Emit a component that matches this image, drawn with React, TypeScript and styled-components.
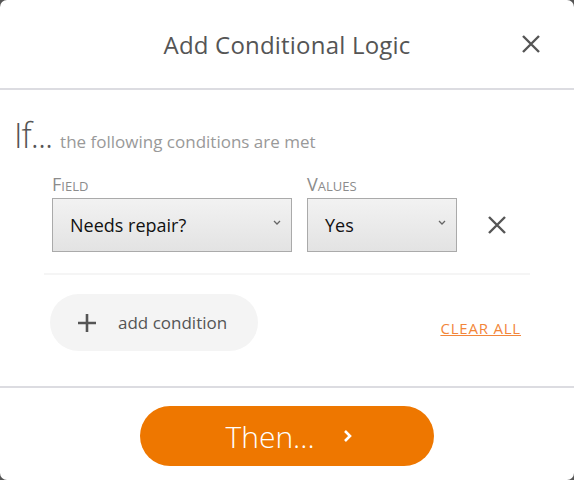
import { createGlobalStyle, styled } from 'styled-components';

const GlobalStyle = createGlobalStyle`
  html, body {
    margin: 0;
    padding: 0;
    background: #555555;
  }
  body {
    font-family: 'Open Sans', 'Noto Sans', sans-serif;
  }
  * {
    box-sizing: border-box;
  }
`;

function CrossIcon({ size = 20, stroke = 2.4 }: { size?: number; stroke?: number }) {
  return (
    <svg width={size} height={size} viewBox="0 0 20 20" fill="none">
      <path
        d="M2 2 L18 18 M18 2 L2 18"
        stroke="#555"
        strokeWidth={stroke}
        strokeLinecap="butt"
      />
    </svg>
  );
}

function Caret() {
  return (
    <svg width="8" height="5" viewBox="0 0 8 5" fill="none">
      <path d="M1 1 L4 4 L7 1" stroke="#666" strokeWidth="1.3" />
    </svg>
  );
}

function App() {
  return (
    <>
      <GlobalStyle />
      <Styled.Modal>
        <Styled.Header>
          <span />
          <Styled.Title>Add Conditional Logic</Styled.Title>
          <Styled.IconButton $align="end" aria-label="close">
            <CrossIcon size={20} stroke={2.4} />
          </Styled.IconButton>
        </Styled.Header>

        <Styled.Body>
          <Styled.IfLine>
            <Styled.IfWord>If...</Styled.IfWord>
            <Styled.IfNote>the following conditions are met</Styled.IfNote>
          </Styled.IfLine>

          <Styled.Conditions>
            <Styled.Row>
              <Styled.Label>Field</Styled.Label>
              <Styled.Label>Values</Styled.Label>
              <span />
              <Styled.Select $width={240}>
                <span>Needs repair?</span>
                <Caret />
              </Styled.Select>
              <Styled.Select $width={150}>
                <span>Yes</span>
                <Caret />
              </Styled.Select>
              <Styled.IconButton $align="center" aria-label="remove condition">
                <CrossIcon size={20} stroke={2.4} />
              </Styled.IconButton>
            </Styled.Row>
          </Styled.Conditions>

          <Styled.Divider />

          <Styled.Actions>
            <Styled.AddButton>
              <svg width="18" height="18" viewBox="0 0 18 18">
                <path d="M9 0 V18 M0 9 H18" stroke="#555" strokeWidth="2.6" />
              </svg>
              <span>add condition</span>
            </Styled.AddButton>
            <Styled.ClearLink href="#">CLEAR ALL</Styled.ClearLink>
          </Styled.Actions>
        </Styled.Body>

        <Styled.Footer>
          <Styled.ThenButton>
            <span>Then...</span>
            <svg width="10" height="14" viewBox="0 0 10 14" fill="none">
              <path d="M2 2 L7 7 L2 12" stroke="#fff" strokeWidth="2.6" />
            </svg>
          </Styled.ThenButton>
        </Styled.Footer>
      </Styled.Modal>
    </>
  );
}

export default App;

const Styled = {
  Modal: styled.div`
    width: 574px;
    height: 480px;
    background: #ffffff;
    border-radius: 7px;
    display: flex;
    flex-direction: column;
    overflow: hidden;
  `,
  Header: styled.div`
    height: 90px;
    flex: none;
    border-bottom: 2px solid #dcdce1;
    display: grid;
    grid-template-columns: 1fr auto 1fr;
    align-items: center;
    padding: 0 33px;
  `,
  Title: styled.h1`
    margin: 0;
    font-size: 24px;
    font-weight: 400;
    color: #555;
    letter-spacing: 0.2px;
  `,
  IconButton: styled.button<{ $align: 'end' | 'center' }>`
    justify-self: ${(p) => p.$align};
    border: none;
    background: none;
    padding: 0;
    width: 20px;
    height: 20px;
    display: grid;
    place-items: center;
    cursor: pointer;
  `,
  Body: styled.div`
    flex: 1;
    padding: 22px 0 0 14px;
  `,
  IfLine: styled.div`
    display: flex;
    align-items: baseline;
    gap: 8px;
    height: 46px;
  `,
  IfWord: styled.span`
    font-size: 34px;
    font-weight: 300;
    color: #555;
    letter-spacing: -1px;
  `,
  IfNote: styled.span`
    font-size: 17px;
    color: #999;
  `,
  Conditions: styled.div`
    padding: 17px 0 0 38px;
  `,
  Row: styled.div`
    display: grid;
    grid-template-columns: 240px 150px 50px;
    column-gap: 15px;
    row-gap: 5px;
    align-items: center;
  `,
  Label: styled.div`
    font-size: 18px;
    font-variant: small-caps;
    color: #8c8c8c;
    line-height: 18px;
  `,
  Select: styled.div<{ $width: number }>`
    width: ${(p) => p.$width}px;
    height: 54px;
    border: 1px solid #aaaaaa;
    background: linear-gradient(#f2f2f2, #e3e3e3);
    display: flex;
    align-items: center;
    justify-content: space-between;
    padding: 0 10px 0 17px;
    font-size: 18px;
    color: #111;
    svg {
      margin-top: -6px;
    }
  `,
  Divider: styled.div`
    height: 2px;
    width: 486px;
    margin: 21px 0 0 30px;
    background: #f5f5f5;
  `,
  Actions: styled.div`
    width: 471px;
    margin: 19px 0 0 36px;
    display: flex;
    align-items: center;
    justify-content: space-between;
  `,
  AddButton: styled.button`
    height: 57px;
    width: 208px;
    border: none;
    border-radius: 29px;
    background: #f4f4f4;
    display: flex;
    align-items: center;
    gap: 22px;
    padding: 0 0 0 28px;
    font-family: inherit;
    font-size: 17px;
    color: #555;
    cursor: pointer;
  `,
  ClearLink: styled.a`
    font-size: 15px;
    letter-spacing: 0.8px;
    color: #f2863a;
    text-decoration: underline;
    margin-top: 10px;
  `,
  Footer: styled.div`
    flex: none;
    height: 94px;
    border-top: 2px solid #dcdce1;
    display: flex;
    justify-content: center;
    padding-top: 18px;
  `,
  ThenButton: styled.button`
    width: 294px;
    height: 60px;
    border: none;
    border-radius: 30px;
    background: #ee7700;
    color: #fff;
    font-family: inherit;
    font-size: 30px;
    font-weight: 300;
    display: flex;
    align-items: center;
    justify-content: center;
    gap: 28px;
    padding-left: 10px;
    cursor: pointer;
  `,
};
